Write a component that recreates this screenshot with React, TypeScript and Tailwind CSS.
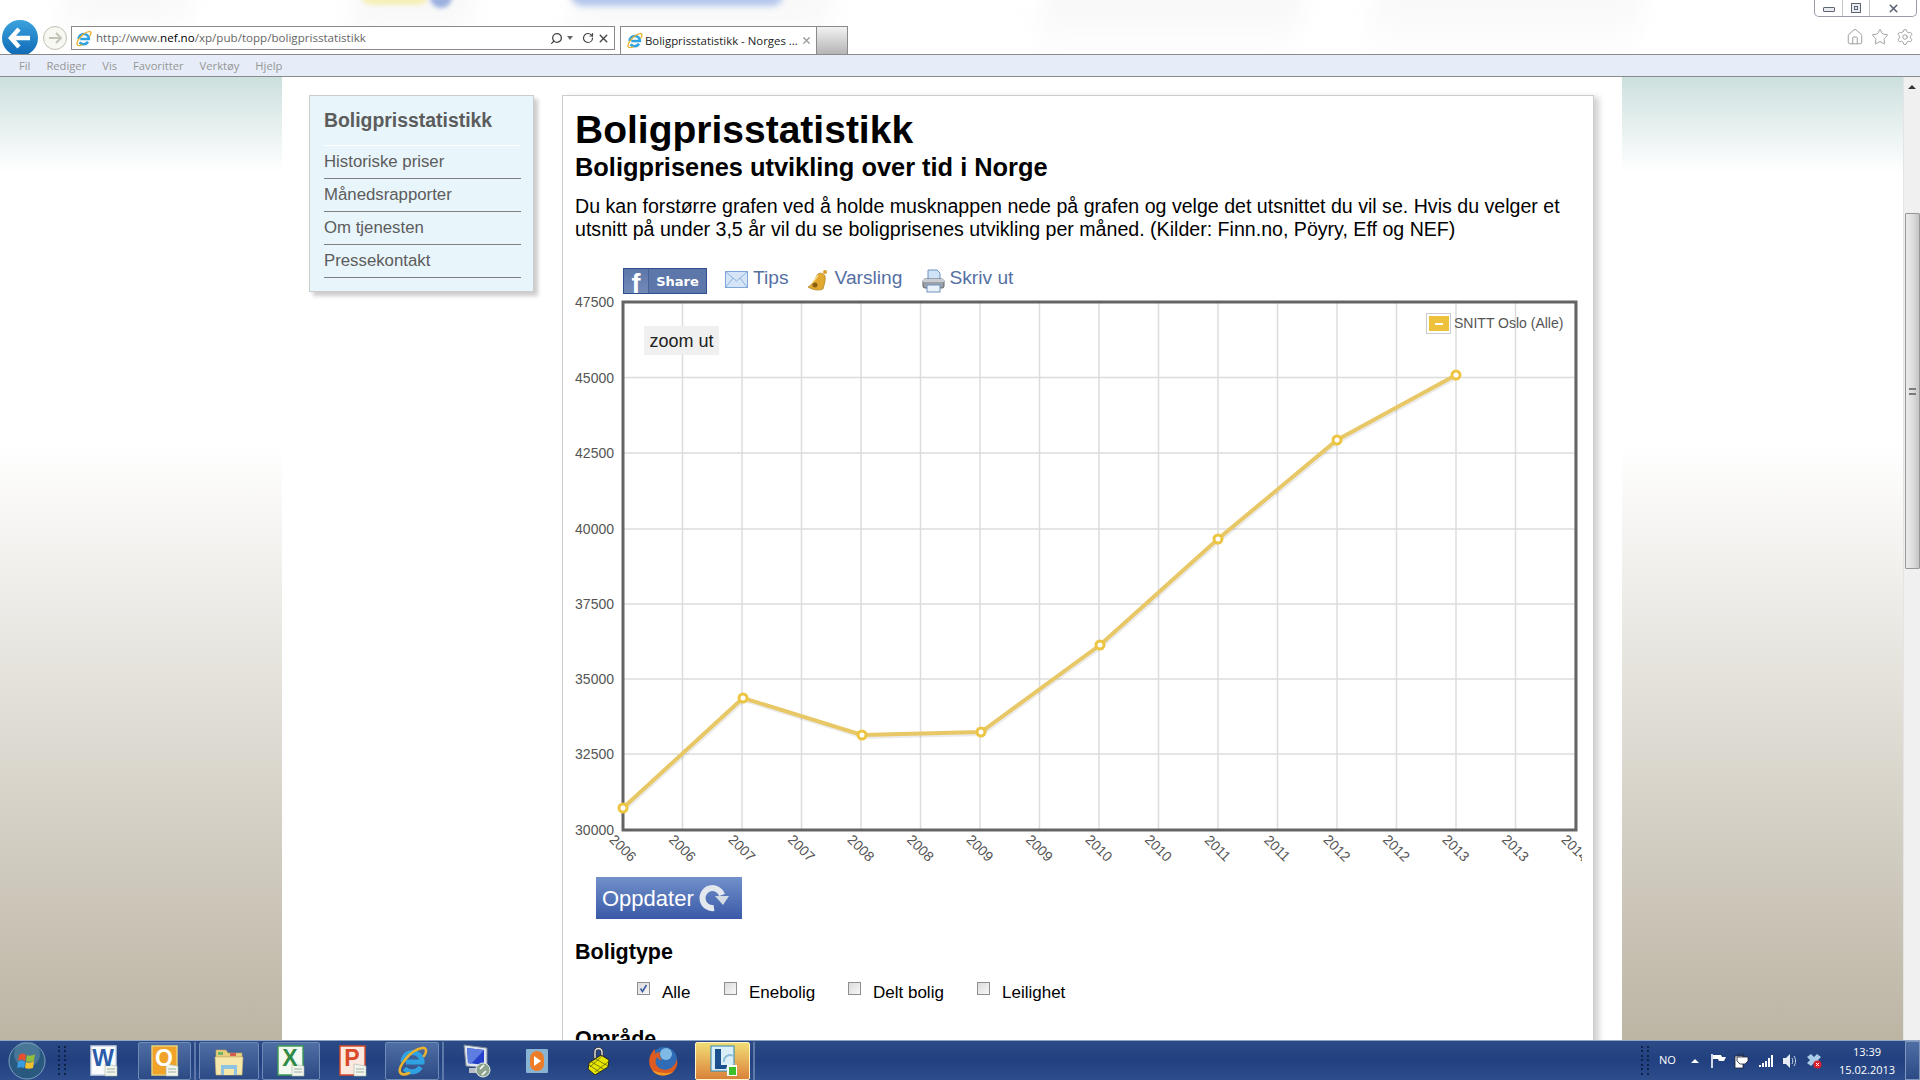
import React from 'react';
import { Home, Search, RotateCw, Settings, Star, X } from 'lucide-react';

const yTicks = [
  { label: '47500', y: 302 },
  { label: '45000', y: 377.5 },
  { label: '42500', y: 453 },
  { label: '40000', y: 529 },
  { label: '37500', y: 604 },
  { label: '35000', y: 679 },
  { label: '32500', y: 754 },
  { label: '30000', y: 830 },
];

const xLabels = ['2006', '2006', '2007', '2007', '2008', '2008', '2009', '2009', '2010', '2010', '2011', '2011', '2012', '2012', '2013', '2013', '2014'];

const points = [
  [623, 808],
  [743, 698],
  [862, 735],
  [981, 732],
  [1100, 645],
  [1218, 539],
  [1337, 440],
  [1456, 375],
];

const sideLinks = ['Historiske priser', 'Månedsrapporter', 'Om tjenesten', 'Pressekontakt'];
const boligtyper = [
  { label: 'Alle', checked: true, cls: 'ml-[62px] w-[87px]' },
  { label: 'Enebolig', checked: false, cls: 'w-[124px]' },
  { label: 'Delt bolig', checked: false, cls: 'w-[129px]' },
  { label: 'Leilighet', checked: false, cls: 'w-[100px]' },
];

const IeIcon = ({ size = 17 }: { size?: number }) => (
  <svg width={size} height={size} viewBox="0 0 32 32" fill="none">
    <path d="M7 17a9.5 9.5 0 0 1 19 0H10M24.5 22a10 10 0 0 1-16 1.5" stroke="#2fa2e2" strokeWidth="5" />
    <path d="M4 27C2 22 14 5 26 3c5-1 5 4 2 8M4 27c1 3 5 3 9 1" stroke="#e9b22f" strokeWidth="2.6" strokeLinecap="round" />
  </svg>
);

type DocProps = { letter: string; bg: string; ink: string; edge: string };

const DocIcon = ({ letter, bg, ink, edge }: DocProps) => (
  <svg width="30" height="32" viewBox="0 0 30 32">
    <path d="M2 1h25v29H2z" fill={bg} stroke={edge} strokeWidth="1.4" />
    <path d="M16 19l12 2v10H16z" fill="#f2f4ee" stroke="#a9b5a3" strokeWidth="0.6" />
    <path d="M18 24h8M18 27h8" stroke="#9fb0a0" strokeWidth="1" />
    <text x="14" y="21" textAnchor="middle" fontSize="23" fontWeight="700" fontFamily="Liberation Sans" fill={ink}>{letter}</text>
  </svg>
);

const FolderIcon = () => (
  <svg width="32" height="30" viewBox="0 0 32 30">
    <path d="M3 4h10l2 3h14v4H3z" fill="#e9cf7e" stroke="#bda65c" strokeWidth="0.6" />
    <path d="M5 6h5v3H5z" fill="#6fb46c" />
    <path d="M17 7h6v3h-6z" fill="#d45f50" />
    <path d="M2 11h28l-1 18H3z" fill="#f6e7ab" stroke="#c9b170" strokeWidth="0.6" />
    <path d="M8 19h16v10H8z" fill="#8fc3e4" />
    <path d="M11 23h10v6H11z" fill="#f6e7ab" />
  </svg>
);

const RdpIcon = () => (
  <svg width="32" height="34" viewBox="0 0 32 34">
    <path d="M3 1l23 3v20L5 22z" fill="#dfe5ef" stroke="#7c8795" />
    <path d="M6 4l17 2v15L7 19z" fill="#2540c8" />
    <path d="M6 4l17 2-13 14-3-1z" fill="#5d7de0" />
    <path d="M8 24h8l2 5H8z" fill="#b7bec8" />
    <circle cx="22" cy="26" r="7" fill="#8fa48e" stroke="#e7ece6" />
    <path d="M19 25l4-4M25 27l-4 4" stroke="#fff" strokeWidth="1.6" />
  </svg>
);

const MediaIcon = () => (
  <svg width="26" height="26" viewBox="0 0 26 26">
    <rect x="2" y="1" width="22" height="24" rx="1" fill="#89b3d3" />
    <rect x="6" y="3" width="14" height="20" rx="7" fill="#ec7c27" />
    <path d="M10 8l7 5-7 5z" fill="#fff" />
  </svg>
);

const LockIcon = () => (
  <svg width="24" height="28" viewBox="0 0 24 28">
    <path d="M8 11V5a3.5 3.5 0 0 1 7 0v6" fill="none" stroke="#333" strokeWidth="3" />
    <path d="M8 11V5a3.5 3.5 0 0 1 7 0v6" fill="none" stroke="#e6e6e6" strokeWidth="1.4" />
    <path d="M14 8l8 5-1 7-13 8-7-6 1-6z" fill="#e5e500" stroke="#222" />
    <path d="M3 14l15 9M2 18l12 8M7 11l14 8M21 15L8 25M15 9L3 20" stroke="#55550a" strokeWidth="0.7" />
  </svg>
);

const FirefoxIcon = ({ size = 32 }: { size?: number }) => (
  <svg width={size} height={size} viewBox="0 0 32 32">
    <circle cx="17" cy="15" r="13" fill="#2f6cb5" />
    <circle cx="19" cy="9" r="6" fill="#7fb9e6" />
    <path d="M8 4C2 9 0 18 5 25c5 7 15 7 21 2 4-4 5-9 4-13-1 4-3 7-6 9-5 3-11 2-14-2-2-3-2-6 0-9 1 2 3 3 5 3-2-2-3-5-2-8-2 0-4 1-5 2z" fill="#dd5b1e" />
    <path d="M5 25c5 7 15 7 21 2-6 2-15 1-21-2z" fill="#f39a26" />
  </svg>
);

const LyncIcon = () => (
  <svg width="32" height="32" viewBox="0 0 32 32">
    <rect x="4" y="1" width="23" height="25" fill="#d9eef7" stroke="#2d8ab8" />
    <path d="M8 4h6v16h6v4H8z" fill="#1c4f8e" />
    <path d="M17 17a6 6 0 0 1 9-6M27 18a6 6 0 0 1-8 5" fill="none" stroke="#8dbfd8" strokeWidth="2" />
    <rect x="20" y="20" width="10" height="11" fill="#fff" />
    <rect x="22" y="22" width="7" height="8" fill="#3cbf2a" />
  </svg>
);

const WinOrb = () => (
  <svg width="38" height="38" viewBox="0 0 38 38">
    <circle cx="19" cy="19" r="18" fill="#29597f" stroke="#7ba0bb" />
    <circle cx="19" cy="12" r="13" fill="#6e9ab4" opacity="0.45" />
    <path d="M11 13c3-2 5-2 7 0l-1 6c-2-2-4-2-7 0z" fill="#e8502e" />
    <path d="M19 13c2 1 5 1 8-1l-1 7c-3 1-6 1-8 0z" fill="#8fbf3c" />
    <path d="M10 20c3-2 5-2 7 0l-1 6c-2-1-5-1-7 0z" fill="#3a9be0" />
    <path d="M18 20c2 1 5 1 8-1l-1 7c-3 1-6 1-8 0z" fill="#f0c12c" />
  </svg>
);

const BellIcon = () => (
  <svg width="24" height="24" viewBox="0 0 24 24">
    <path d="M2 18c4-2 7-7 9-12 2-3 7-2 8 1 1 4-1 9-2 13-5 2-10 1-15-2z" fill="#e3a92f" stroke="#a97c1d" strokeWidth="0.7" />
    <circle cx="19" cy="3" r="2" fill="#d99f2a" />
    <circle cx="9" cy="16" r="2.5" fill="#8a5f12" />
    <path d="M6 14c2-2 5-6 6-8" stroke="#f8df8e" strokeWidth="1.5" fill="none" />
  </svg>
);

const PrintIcon = () => (
  <svg width="23" height="24" viewBox="0 0 23 24">
    <path d="M6 1h9l3 3v8H6z" fill="#cfe3f7" stroke="#6f94c0" />
    <rect x="1" y="10" width="21" height="9" rx="2" fill="#9ca1a8" stroke="#5e6369" />
    <rect x="1" y="10" width="21" height="3" fill="#c9ccd0" />
    <rect x="5" y="16" width="13" height="7" fill="#e9f1fa" stroke="#6f94c0" />
  </svg>
);

const MailIcon = () => (
  <svg width="23" height="17" viewBox="0 0 23 17">
    <rect x="0.5" y="0.5" width="22" height="16" fill="#d5e5f7" stroke="#7ea6d8" />
    <path d="M1 1l10.5 9L22 1M1 16l7-9M22 16l-7-9" fill="none" stroke="#8fb3df" />
  </svg>
);

const ReloadIcon = () => (
  <svg width="32" height="30" viewBox="0 0 32 30">
    <path d="M16 25A10 10 0 1 1 24 12" fill="none" stroke="#e3e7ee" strokeWidth="6" />
    <path d="M17 13h14l-6 9z" fill="#d5dbe5" />
  </svg>
);

const Checkbox = ({ checked }: { checked: boolean }) => (
  <span className="flex h-[13px] w-[13px] shrink-0 items-center justify-center border border-[#8e8f8f] bg-gradient-to-br from-[#dcdcdc] to-[#f7f7f7]">
    {checked && (
      <svg width="9" height="9" viewBox="0 0 9 9">
        <path d="M1.5 4.5l2 3 4-6.5" fill="none" stroke="#3c5a9e" strokeWidth="1.6" />
      </svg>
    )}
  </span>
);

const TaskSlot = ({ cls, children }: { cls: string; children: React.ReactNode }) => (
  <div className={`flex h-[38px] items-center justify-center rounded-[2px] ${cls}`}>{children}</div>
);

const openSlot = 'border border-[#6f8ab5] bg-gradient-to-b from-[#4f6ea4] to-[#2c4a85]';

const Grip = ({ cls }: { cls: string }) => (
  <div className={`grid h-[30px] w-[10px] grid-cols-2 gap-[2px] ${cls}`}>
    {Array.from({ length: 14 }).map((_, i) => (
      <span key={i} className="h-[2px] w-[2px] bg-[#0e2149]" />
    ))}
  </div>
);

const TrendChart = () => (
  <svg width="1007" height="576" viewBox="575 294 1007 576" className="block">
    {xLabels.map((_, i) => (
      <line key={i} x1={623 + 59.5 * i} y1="302" x2={623 + 59.5 * i} y2="830" stroke="#dcdcdc" strokeWidth="1.5" />
    ))}
    {yTicks.map((t) => (
      <g key={t.label}>
        <line x1="623" y1={t.y} x2="1576" y2={t.y} stroke="#dcdcdc" strokeWidth="1.5" />
        <text x="614" y={t.y + 5} textAnchor="end" fontSize="14" fill="#555" fontFamily="Liberation Sans">{t.label}</text>
      </g>
    ))}
    <rect x="623" y="302" width="953" height="528" fill="none" stroke="#646464" strokeWidth="3" />
    {xLabels.map((label, i) => (
      <text
        key={i}
        x={623 + 59.5 * i}
        y={853}
        textAnchor="middle"
        fontSize="14"
        fill="#555"
        fontFamily="Liberation Sans"
        transform={`rotate(45 ${623 + 59.5 * i} 848)`}
      >
        {label}
      </text>
    ))}
    <polyline points={points.map((p) => `${p[0] + 1},${p[1] + 2}`).join(' ')} fill="none" stroke="#000" strokeOpacity="0.08" strokeWidth="4" />
    <polyline points={points.map((p) => p.join(',')).join(' ')} fill="none" stroke="#e8c766" strokeWidth="4" />
    {points.map((p) => (
      <circle key={p[0]} cx={p[0]} cy={p[1]} r="4" fill="#fff" stroke="#ecc543" strokeWidth="3" />
    ))}
    <rect x="644" y="326" width="75" height="29" fill="#f0f0f0" />
    <text x="681.5" y="347" textAnchor="middle" fontSize="18" fill="#222" fontFamily="Liberation Sans">zoom ut</text>
    <rect x="1426.5" y="313.5" width="24" height="20" fill="#fff" stroke="#ccc" />
    <rect x="1429" y="316" width="20" height="15" fill="#eec13c" />
    <rect x="1435" y="323" width="8" height="2" fill="#fff" />
    <text x="1454" y="328" fontSize="14" fill="#555" fontFamily="Liberation Sans">SNITT Oslo (Alle)</text>
  </svg>
);

export default function App() {
  return (
    <div className="flex h-screen w-full flex-col overflow-hidden bg-white font-['Liberation_Sans',Arial,sans-serif]">
      {/* IE chrome */}
      <header className="relative h-[54px] shrink-0 overflow-hidden bg-white">
        <div className="absolute left-[60px] top-[-10px] h-[50px] w-[130px] -skew-x-12 bg-gradient-to-b from-[#f6f6f6] to-white blur-md" />
        <div className="absolute left-[350px] top-[-10px] h-[60px] w-[120px] -skew-x-12 bg-gradient-to-b from-[#f5f5f5] to-white blur-md" />
        <div className="absolute left-[570px] top-[-10px] h-[60px] w-[260px] -skew-x-12 bg-gradient-to-b from-[#f6f6f6] to-white blur-md" />
        <div className="absolute left-[1040px] top-[-10px] h-[70px] w-[260px] -skew-x-12 bg-gradient-to-b from-[#f6f6f6] to-white blur-md" />
        <div className="absolute left-[1370px] top-[-10px] h-[70px] w-[270px] -skew-x-12 bg-gradient-to-b from-[#f7f7f7] to-white blur-md" />
        <div className="absolute left-[361px] top-[-5px] h-[10px] w-[68px] rounded-b-full bg-[#f6efb8] blur-[2px]" />
        <div className="absolute left-[430px] top-[-6px] h-[14px] w-[22px] rounded-b-full bg-[#9db1e0] blur-[2px]" />
        <div className="absolute left-[570px] top-[-7px] h-[13px] w-[214px] rounded-b-full bg-[#b3c6ec] blur-[3px]" />

        <div className="absolute right-[3px] top-0 flex h-[17px] w-[103px] rounded-b-[5px] border border-t-0 border-[#9a9ca5] bg-white">
          <div className="flex w-[28px] items-center justify-center border-r border-[#c4c5ca] pt-[3px]">
            <span className="h-[5px] w-[12px] rounded-[1px] border border-[#5d6474] bg-[#e9ebf0]" />
          </div>
          <div className="flex w-[27px] items-center justify-center border-r border-[#c4c5ca]">
            <span className="flex h-[10px] w-[10px] items-center justify-center border border-[#5d6474] bg-[#e9ebf0]">
              <span className="h-[4px] w-[4px] border border-[#5d6474]" />
            </span>
          </div>
          <div className="flex flex-1 items-center justify-center">
            <X size={13} strokeWidth={3} className="text-[#5d6474]" />
          </div>
        </div>

        <div className="relative flex h-full items-start pl-[2px] pt-[20px]">
          <div className="flex h-[36px] w-[36px] shrink-0 items-center justify-center rounded-full bg-gradient-to-b from-[#3aa3dd] to-[#0e68b5]">
            <svg width="24" height="22" viewBox="0 0 24 22">
              <path d="M11 2L3 11l8 9M3 11h19" fill="none" stroke="#fff" strokeWidth="4.4" />
            </svg>
          </div>
          <div className="ml-[5px] mt-[6px] flex h-[24px] w-[24px] shrink-0 items-center justify-center rounded-full border border-[#c0c0b4] bg-[#f8f8f2]">
            <svg width="16" height="14" viewBox="0 0 16 14">
              <path d="M9 2l5 5-5 5M14 7H2" fill="none" stroke="#c3c3b8" strokeWidth="2" />
            </svg>
          </div>
          <div className="ml-[4px] mt-[6px] flex h-[24px] w-[544px] shrink-0 items-center border border-[#8a8a8a] bg-white pl-[3px] pr-[4px] font-['Open_Sans',sans-serif] text-[11.6px] text-[#666]">
            <IeIcon />
            <span className="ml-[4px] flex-1 truncate">
              http://www.<span className="text-black">nef.no</span>/xp/pub/topp/boligprisstatistikk
            </span>
            <Search size={13} strokeWidth={2.4} className="-scale-x-100 text-[#444]" />
            <span className="ml-[4px] h-0 w-0 border-x-[3px] border-t-[4px] border-x-transparent border-t-[#666]" />
            <RotateCw size={12} strokeWidth={2.4} className="ml-[9px] text-[#444]" />
            <X size={13} strokeWidth={2.6} className="ml-[3px] text-[#444]" />
          </div>
          <div className="ml-[5px] mt-[6px] flex h-[28px] w-[197px] shrink-0 items-center border border-b-0 border-[#8a8a8a] bg-white pl-[5px] font-['Open_Sans',sans-serif] text-[11.4px] text-[#222]">
            <IeIcon />
            <span className="ml-[2px] flex-1 truncate">Boligprisstatistikk - Norges ...</span>
            <X size={11} strokeWidth={2.6} className="mr-[4px] text-[#999]" />
          </div>
          <div className="mt-[6px] h-[28px] w-[31px] shrink-0 border border-l-0 border-b-0 border-[#8a8a8a] bg-gradient-to-b from-[#f2f2f2] to-[#b5b5b5]" />

          <div className="absolute right-[6px] top-[28px] flex items-center gap-[7px] text-[#9c9c9c]">
            <Home size={18} strokeWidth={1.3} />
            <Star size={18} strokeWidth={1.3} />
            <Settings size={18} strokeWidth={1.3} />
          </div>
        </div>
      </header>

      {/* Menu bar */}
      <nav className="flex h-[23px] shrink-0 items-center gap-[16px] border-y border-[#8a8a8a] bg-[#e6edf8] pl-[19px] pt-[1px] font-['Open_Sans',sans-serif] text-[11.2px] text-[#969696]">
        <span>Fil</span>
        <span>Rediger</span>
        <span>Vis</span>
        <span>Favoritter</span>
        <span>Verktøy</span>
        <span>Hjelp</span>
      </nav>

      {/* Page */}
      <main className="flex min-h-0 flex-1">
        <div className="w-[282px] shrink-0 bg-[linear-gradient(to_bottom,#cce0de_0px,#ffffff_95px,#ffffff_370px,#bcb5a4_100%)]" />
        <div className="flex w-[1340px] shrink-0 items-start overflow-hidden bg-white pl-[27px] pt-[18px]">
          <aside className="w-[225px] shrink-0 border border-[#ccc] bg-[#e8f5fb] pb-[13px] pl-[14px] pr-[12px] pt-[12px] text-[#5c5c5c] shadow-[4px_4px_4px_rgba(0,0,0,0.2)]">
            <h3 className="border-b border-white pb-[12px] text-[19.4px] font-bold leading-[25px]">Boligprisstatistikk</h3>
            {sideLinks.map((l) => (
              <div key={l} className="flex h-[33px] items-center border-b border-[#808080] text-[16.8px]">{l}</div>
            ))}
          </aside>

          <section className="ml-[28px] h-[1000px] w-[1032px] shrink-0 border border-[#ccc] bg-white pl-[12px] pt-[13px] text-black shadow-[5px_2px_6px_rgba(0,0,0,0.18)]">
            <h1 className="text-[39px] font-bold leading-[42px]">Boligprisstatistikk</h1>
            <h2 className="mt-[2px] text-[25.4px] font-bold leading-[28px]">Boligprisenes utvikling over tid i Norge</h2>
            <p className="mt-[14px] w-[1000px] text-[19.6px] leading-[23px]">
              Du kan forstørre grafen ved å holde musknappen nede på grafen og velge det utsnittet du vil se. Hvis du velger et utsnitt på under 3,5 år vil du se boligprisenes utvikling per måned. (Kilder: Finn.no, Pöyry, Eff og NEF)
            </p>

            <div className="ml-[48px] mt-[27px] flex h-[26px] items-center text-[19.2px] text-[#5570a4]">
              <div className="flex h-[26px] w-[84px] items-stretch overflow-hidden border border-[#2f4f8f] bg-[#5d77aa] text-white">
                <span className="w-[25px] border-r border-[#4a6296] bg-gradient-to-b from-[#5d77aa] to-[#7389b8] text-center text-[27px] font-bold leading-[30px]">f</span>
                <span className="flex-1 text-center font-['DejaVu_Sans',sans-serif] text-[13px] font-bold leading-[25px]">Share</span>
              </div>
              <span className="ml-[18px] mb-[3px]"><MailIcon /></span>
              <span className="ml-[5px] pb-[6px]">Tips</span>
              <span className="ml-[17px]"><BellIcon /></span>
              <span className="ml-[5px] pb-[6px]">Varsling</span>
              <span className="ml-[20px]"><PrintIcon /></span>
              <span className="ml-[4px] pb-[6px]">Skriv ut</span>
            </div>

            <TrendChart />

            <button className="ml-[21px] mt-[7px] flex h-[42px] w-[146px] items-center gap-[4px] bg-gradient-to-b from-[#7290c9] to-[#3a59a8] pl-[6px] text-[22px] text-white">
              Oppdater
              <ReloadIcon />
            </button>

            <h3 className="mt-[20px] text-[21.5px] font-bold leading-[26px]">Boligtype</h3>
            <div className="mt-[15px] flex">
              {boligtyper.map((b) => (
                <label key={b.label} className={`flex items-start text-[17px] leading-[20px] ${b.cls}`}>
                  <span className="mt-[2px]"><Checkbox checked={b.checked} /></span>
                  <span className="ml-[12px] mt-[3px]">{b.label}</span>
                </label>
              ))}
            </div>
            <h3 className="mt-[23px] text-[21.5px] font-bold leading-[26px]">Område</h3>
          </section>
        </div>
        <div className="flex-1 bg-[linear-gradient(to_bottom,#cce0de_0px,#ffffff_95px,#ffffff_370px,#bcb5a4_100%)]" />
        <div className="flex w-[17px] shrink-0 flex-col items-center border-l border-[#e4e4e4] bg-[#f0f0f0]">
          <span className="mt-[8px] h-0 w-0 border-x-[4px] border-b-[4px] border-x-transparent border-b-[#333]" />
          <div className="mt-[124px] flex h-[356px] w-[15px] items-center justify-center rounded-[1px] border border-[#979797] bg-gradient-to-r from-[#ececec] via-[#dedede] to-[#c4c4c4]">
            <span className="h-[7px] w-[7px] border-y-2 border-[#7b7b7b]" />
          </div>
        </div>
      </main>

      {/* Windows taskbar */}
      <footer className="flex h-[40px] shrink-0 items-center border-t border-[#8fa3c4] bg-gradient-to-b from-[#2b4a86] via-[#22407f] to-[#2d4d8c] text-white">
        <div className="ml-[8px] w-[46px] shrink-0"><WinOrb /></div>
        <Grip cls="ml-[4px] mr-[7px]" />
        <TaskSlot cls="w-[58px]"><DocIcon letter="W" bg="#fbfcfe" ink="#2a5caa" edge="#c9d3e5" /></TaskSlot>
        <TaskSlot cls={`ml-[5px] w-[53px] ${openSlot}`}><DocIcon letter="O" bg="#f0a328" ink="#fff" edge="#e9d27a" /></TaskSlot>
        <div className="mx-[3px] h-[38px] w-[2px] bg-[#5e78a8]" />
        <TaskSlot cls={`w-[60px] ${openSlot}`}><FolderIcon /></TaskSlot>
        <TaskSlot cls={`ml-[3px] w-[58px] ${openSlot}`}><DocIcon letter="X" bg="#f3f8f0" ink="#2f8a45" edge="#3c9a55" /></TaskSlot>
        <TaskSlot cls="ml-[3px] w-[60px]"><DocIcon letter="P" bg="#fbe9e0" ink="#d9492a" edge="#d9492a" /></TaskSlot>
        <TaskSlot cls={`ml-[2px] w-[54px] ${openSlot}`}><IeIcon size={32} /></TaskSlot>
        <div className="mx-[3px] h-[38px] w-[2px] bg-[#5e78a8]" />
        <TaskSlot cls="w-[60px]"><RdpIcon /></TaskSlot>
        <TaskSlot cls="ml-[5px] w-[50px]"><MediaIcon /></TaskSlot>
        <TaskSlot cls="ml-[10px] w-[54px]"><LockIcon /></TaskSlot>
        <TaskSlot cls="ml-[10px] w-[54px]"><FirefoxIcon /></TaskSlot>
        <TaskSlot cls="ml-[5px] w-[55px] border border-[#fff4c8] bg-gradient-to-b from-[#f0dc74] to-[#d9813a]"><LyncIcon /></TaskSlot>
        <div className="ml-[3px] h-[38px] w-[2px] bg-[#5e78a8]" />

        <div className="ml-auto flex h-full items-center font-['Open_Sans',sans-serif]">
          <Grip cls="mr-[8px]" />
          <span className="w-[22px] text-[11px]">NO</span>
          <span className="ml-[10px] h-0 w-0 border-x-[4px] border-b-[4px] border-x-transparent border-b-white" />
          <svg width="17" height="16" viewBox="0 0 17 16" className="ml-[11px]">
            <path d="M2 1v14" stroke="#fff" strokeWidth="1.6" />
            <path d="M3 2h8l1 2h4l-2 4h-5l-1-2H3z" fill="#fff" />
          </svg>
          <svg width="15" height="16" viewBox="0 0 15 16" className="ml-[7px]">
            <rect x="1" y="3" width="8" height="12" fill="#fff" stroke="#223" strokeWidth="0.8" />
            <path d="M5 3V0M9 3V0M3 4h11v4l-3 3H6L3 8z" fill="#fff" stroke="#223" strokeWidth="0.8" />
          </svg>
          <svg width="16" height="14" viewBox="0 0 16 14" className="ml-[9px]">
            <path d="M1 11h2v2H1zM4 9h2v4H4zM7 7h2v6H7zM10 4h2v9h-2zM13 1h2v12h-2z" fill="#fff" />
          </svg>
          <svg width="15" height="16" viewBox="0 0 15 16" className="ml-[8px]">
            <path d="M1 5h3l4-4v14l-4-4H1z" fill="#e8edf5" />
            <path d="M10 5c1 2 1 4 0 6M12 3c2 3 2 7 0 10" fill="none" stroke="#cfd9e8" />
          </svg>
          <svg width="16" height="16" viewBox="0 0 16 16" className="ml-[9px]">
            <path d="M1 4l4-3 3 3 3-3 4 3-3 3 3 3-4 3-3-3-3 3-4-3 3-3z" fill="#a9cbe8" />
            <circle cx="11.5" cy="11.5" r="4" fill="#d9202c" />
            <path d="M10 10l3 3M13 10l-3 3" stroke="#fff" />
          </svg>
          <div className="ml-[14px] w-[62px] text-center text-[11px] leading-[18px]">
            <div>13:39</div>
            <div>15.02.2013</div>
          </div>
          <div className="ml-[7px] h-[39px] w-[15px] border border-[#7f97bd] bg-gradient-to-b from-[#4f6ea4] to-[#2c4a85]" />
        </div>
      </footer>
    </div>
  );
}
